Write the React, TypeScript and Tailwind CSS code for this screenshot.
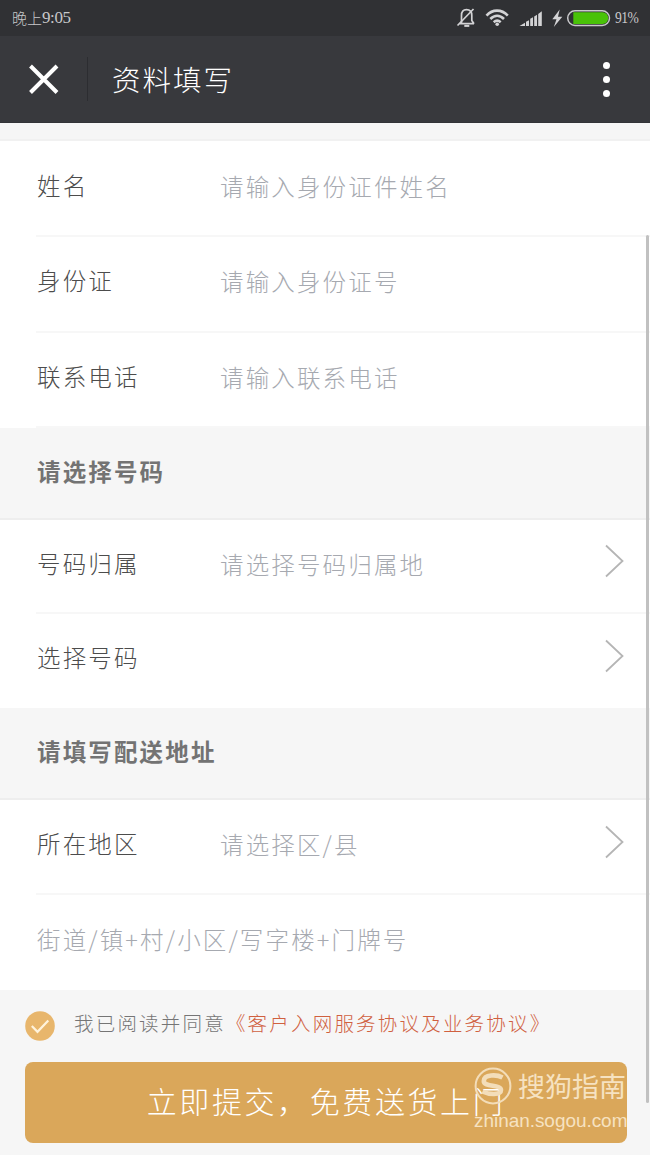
import React from 'react';

type RowProps = {
  label: string;
  placeholder?: string;
  arrow?: boolean;
  height: string;
  divider?: boolean;
  pad?: string;
  arrowTop?: string;
};

function Chevron({ top }: { top: string }) {
  return (
    <svg className={`absolute right-[26px] h-[34px] w-[20px] ${top}`} viewBox="0 0 20 34" fill="none" stroke="#b5b5b5" strokeWidth="1.8">
      <path d="M2 1.5 L18.5 17 L2 32.5" />
    </svg>
  );
}

function Row({ label, placeholder, arrow, height, divider = true, pad = 'pt-[25px]', arrowTop = 'top-[24px]' }: RowProps) {
  return (
    <div className={`relative ml-9 flex text-[23.5px] leading-[36px] tracking-[2.15px] ${height} ${pad} ${divider ? 'border-b-2 border-[#f7f7f7]' : ''}`}>
      <span className="w-[184px] shrink-0 pl-px text-[#4c4c4c]">{label}</span>
      <span className="pt-px whitespace-nowrap text-[#a6a9b0]">{placeholder}</span>
      {arrow && <Chevron top={arrowTop} />}
    </div>
  );
}

function Section({ title }: { title: string }) {
  return (
    <div className="h-[92px] border-b-2 border-[#eeeeee] bg-[#f6f6f6] pt-[25px] pl-[37px] text-[23.5px] leading-[36px] font-bold tracking-[2.15px] text-[#737373]">
      {title}
    </div>
  );
}

function StatusIcons() {
  return (
    <svg className="h-[36px] w-[158px]" viewBox="453 0 158 36" fill="none">
      <g stroke="#d3d3d5" strokeWidth="1.7">
        <path d="M459.5 23.7 h14.5 M461.5 23 V15.5 C461.5 11.5 463.5 9.6 466.5 9.6 C469.5 9.6 471.8 11.5 471.8 15.5 V20.5 L474 23.7" />
        <path d="M457.5 25.5 L473.5 9" />
        <path d="M464.3 25.9 h5" strokeWidth="2" />
      </g>
      <g stroke="#d3d3d5" strokeWidth="2.6">
        <path d="M486.5 15.6 C492.5 9 501.5 9 507.8 15.6" />
        <path d="M490.3 19 C494.5 14.8 499.8 14.8 504 19" />
        <path d="M493.7 22.2 C496 20.2 498.4 20.2 500.7 22.2" />
      </g>
      <circle cx="497.2" cy="24.2" r="1.8" fill="#d3d3d5" />
      <g fill="#d3d3d5">
        <path d="M519.5 26 L525 22.7 V26 Z" />
        <path d="M526 26 V21.8 L529 20.3 V26 Z" />
        <path d="M530.2 26 V18.8 L533 17.2 V26 Z" />
        <path d="M534.2 26 V16.4 L537 14.7 V26 Z" />
        <path d="M538.2 26 V14 L541.8 11.3 V26 Z" />
        <path d="M559.7 9.5 L552.3 19.3 H556.5 L553.8 27 L562.3 16.8 H558 Z" />
      </g>
      <rect x="567.7" y="10.8" width="41.8" height="14.6" rx="7.3" fill="#303134" stroke="#c9c9cb" strokeWidth="1.5" />
      <path d="M573.3 12.3 H602.5 A5.8 5.8 0 0 1 602.5 23.9 H573.3 Z" fill="#49c208" />
    </svg>
  );
}

export default function App() {
  return (
    <div className="relative flex h-[1155px] w-[650px] flex-col overflow-hidden bg-[#f6f6f6] font-['Noto_Sans_CJK_SC',sans-serif] font-light">
      <div className="flex h-9 shrink-0 items-center justify-between bg-[#303134] pr-[11px] pl-3 text-[#c8c8ca]">
        <div className="flex items-center text-[15px]">
          晚上<span className="font-['Liberation_Serif',serif] text-[17px] font-normal tracking-[-0.4px]">9:05</span>
        </div>
        <div className="flex items-center">
          <StatusIcons />
          <span className="ml-1 w-[24px] origin-left scale-x-[0.85] font-['Liberation_Serif',serif] text-[16px] font-normal tracking-[-0.6px]">91%</span>
        </div>
      </div>

      <header className="flex h-[87px] shrink-0 items-center border-b border-[#333438] bg-[#38393d]">
        <svg className="ml-[29px] h-[30px] w-[30px]" viewBox="0 0 30 30" fill="none" stroke="white" strokeWidth="4">
          <path d="M1.5 2 L28 28.5 M28 2 L1.5 28.5" />
        </svg>
        <div className="ml-7 h-[44px] w-px bg-[#2c2d31]" />
        <h1 className="ml-6 text-[28.5px] leading-10 tracking-[2px] text-white">资料填写</h1>
        <div className="mr-[40px] ml-auto flex flex-col gap-[7px]">
          <i className="h-[7px] w-[7px] rounded-full bg-white" />
          <i className="h-[7px] w-[7px] rounded-full bg-white" />
          <i className="h-[7px] w-[7px] rounded-full bg-white" />
        </div>
      </header>

      <div className="h-[18px] shrink-0 border-b-2 border-[#f1f1f1]" />

      <div className="shrink-0 bg-white">
        <Row label="姓名" placeholder="请输入身份证件姓名" height="h-[96px]" pad="pt-[26px]" />
        <Row label="身份证" placeholder="请输入身份证号" height="h-[96px]" />
        <Row label="联系电话" placeholder="请输入联系电话" height="h-[95px]" />
      </div>

      <div className="shrink-0">
        <Section title="请选择号码" />
      </div>

      <div className="shrink-0 bg-white">
        <Row label="号码归属" placeholder="请选择号码归属地" arrow height="h-[94px]" />
        <Row label="选择号码" arrow height="h-[94px]" divider={false} arrowTop="top-[25px]" />
      </div>

      <div className="shrink-0">
        <Section title="请填写配送地址" />
      </div>

      <div className="shrink-0 bg-white">
        <Row label="所在地区" placeholder="请选择区/县" arrow height="h-[95px]" arrowTop="top-[25px]" />
        <div className="h-[95px] pt-[26px] pl-[37px] text-[23.5px] leading-[36px] tracking-[2.15px] whitespace-nowrap text-[#a6a9b0]">
          街道/镇+村/小区/写字楼+门牌号
        </div>
      </div>

      <div className="flex h-[72px] shrink-0 items-center pl-[25px]">
        <svg className="h-[30px] w-[30px] shrink-0" viewBox="0 0 30 30" fill="none">
          <circle cx="15" cy="15" r="14.8" fill="#e8b66c" />
          <path d="M6.8 15 L12.5 20.8 L23.3 9.5" stroke="#fff3dc" strokeWidth="2.2" />
        </svg>
        <p className="-mt-1.5 ml-[19px] text-[19.5px] tracking-[2.2px] whitespace-nowrap text-[#757575]">
          我已阅读并同意<span className="text-[#d0603f]">《客户入网服务协议及业务协议》</span>
        </p>
      </div>

      <button className="ml-[25px] h-[81px] w-[602px] shrink-0 rounded-lg bg-[#daa75a] pb-[6px] text-[30px] leading-10 tracking-[2.6px] text-white">
        立即提交，免费送货上门
      </button>

      <div className="absolute top-[1067px] left-[474px] w-[156px] text-[#f6e2c1]">
        <div className="flex h-[38px] items-center">
          <svg className="h-[38px] w-[38px] shrink-0" viewBox="0 0 38 38" fill="none">
            <circle cx="19" cy="19" r="17.4" stroke="#f3ddb9" strokeWidth="2" />
            <path d="M28.5 10.5 C23 7.5 10 7 9.8 14 C9.6 20.5 27 17.2 27 23 C27 28.5 14.5 27.5 8.5 24.5" stroke="#f3ddb9" strokeWidth="4.6" />
          </svg>
          <span className="ml-[6px] text-[27px] leading-[38px] font-normal whitespace-nowrap">搜狗指南</span>
        </div>
        <div className="mt-px font-['Liberation_Sans',sans-serif] text-[19px] leading-[30px] font-normal tracking-[-0.05px] whitespace-nowrap">zhinan.sogou.com</div>
      </div>

      <div className="absolute top-[235px] right-[1px] h-[868px] w-[3px] rounded-full bg-[#c1c1c1]" />
    </div>
  );
}
